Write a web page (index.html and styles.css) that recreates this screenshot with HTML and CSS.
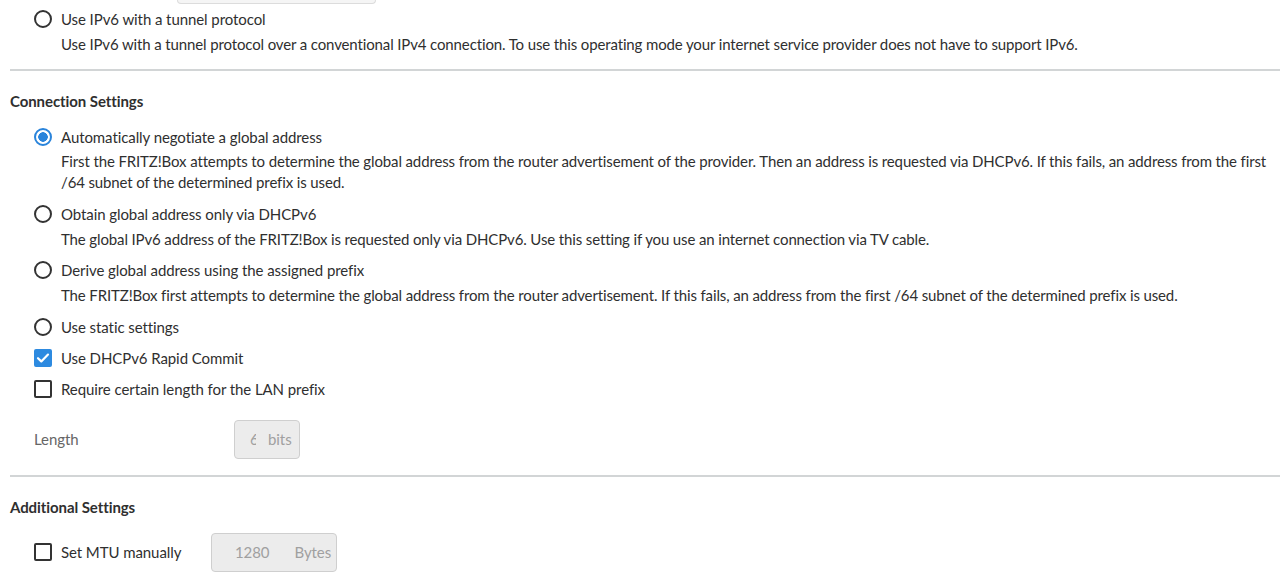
FILE: index.html
```html
<!DOCTYPE html>
<html lang="en">
<head>
  <meta charset="UTF-8" />
  <meta name="viewport" content="width=device-width, initial-scale=1.0" />
  <title>Internet - IPv6</title>
  <link rel="stylesheet" href="styles.css">
</head>
<body>
  <div class="page">
    <div class="stub-field"></div>

    <div class="option">
      <div class="option-row"><span class="radio"></span><label>Use IPv6 with a tunnel protocol</label></div>
      <p class="desc">Use IPv6 with a tunnel protocol over a conventional IPv4 connection. To use this operating mode your internet service provider does not have to support IPv6.</p>
    </div>

    <hr class="divider">

    <h2 class="section-title">Connection Settings</h2>
    <div class="options">
      <div class="option">
        <div class="option-row"><span class="radio checked"></span><label>Automatically negotiate a global address</label></div>
        <p class="desc">First the FRITZ!Box attempts to determine the global address from the router advertisement of the provider. Then an address is requested via DHCPv6. If this fails, an address from the first /64 subnet of the determined prefix is used.</p>
      </div>
      <div class="option">
        <div class="option-row"><span class="radio"></span><label>Obtain global address only via DHCPv6</label></div>
        <p class="desc">The global IPv6 address of the FRITZ!Box is requested only via DHCPv6. Use this setting if you use an internet connection via TV cable.</p>
      </div>
      <div class="option">
        <div class="option-row"><span class="radio"></span><label>Derive global address using the assigned prefix</label></div>
        <p class="desc">The FRITZ!Box first attempts to determine the global address from the router advertisement. If this fails, an address from the first /64 subnet of the determined prefix is used.</p>
      </div>
      <div class="option">
        <div class="option-row"><span class="radio"></span><label>Use static settings</label></div>
      </div>
      <div class="option">
        <div class="option-row">
          <span class="checkbox checked">
            <svg viewBox="0 0 18 18" width="18" height="18"><path d="M4 9.2l3.3 3.2L14 5.6" fill="none" stroke="#fff" stroke-width="2.2" stroke-linecap="round" stroke-linejoin="round"/></svg>
          </span>
          <label>Use DHCPv6 Rapid Commit</label>
        </div>
      </div>
      <div class="option">
        <div class="option-row"><span class="checkbox"></span><label>Require certain length for the LAN prefix</label></div>
      </div>
    </div>

    <div class="field-row length-row">
      <span class="field-label">Length</span>
      <div class="unit-field length-field">
        <span class="value clipped">64</span>
        <span class="unit">bits</span>
      </div>
    </div>

    <hr class="divider">

    <h2 class="section-title">Additional Settings</h2>
    <div class="mtu-row">
      <div class="option-row"><span class="checkbox"></span><label>Set MTU manually</label></div>
      <div class="unit-field mtu-field">
        <span class="value">1280</span>
        <span class="unit">Bytes</span>
      </div>
    </div>
  </div>
</body>
</html>
```

FILE: styles.css
```css
body {
  margin: 0;
  font-family: Lato, "Open Sans", sans-serif;
  font-size: 15px;
  letter-spacing: -0.08px;
  color: #2f2f2f;
  background: #fff;
}
.page {
  padding-left: 10px;
}
.stub-field {
  margin-left: 167px;
  width: 197px;
  height: 3px;
  background: #f5f5f5;
  border: 1px solid #dcdcdc;
  border-top: none;
  border-radius: 0 0 4px 4px;
}
.options {
  display: flex;
  flex-direction: column;
  gap: 7px;
}
.option {
  padding-left: 24px;
}
.stub-field + .option {
  margin-top: 3px;
}
.option-row {
  display: flex;
  align-items: center;
  gap: 9px;
  height: 24px;
}
.option-row label {
  line-height: 24px;
}
.desc {
  margin: 3px 0 1.5px 27px;
  line-height: 21px;
  letter-spacing: -0.13px;
}
.option:first-child .desc {
  margin-top: 2px;
}
.radio {
  box-sizing: border-box;
  width: 18px;
  height: 18px;
  border: 2px solid #333;
  border-radius: 50%;
  flex-shrink: 0;
}
.radio.checked {
  border-color: #2a84db;
  background: radial-gradient(circle, #2a84db 0 4.5px, #fff 5px);
}
.checkbox {
  box-sizing: border-box;
  width: 18px;
  height: 18px;
  border: 2px solid #333;
  border-radius: 2px;
  flex-shrink: 0;
  display: flex;
}
.checkbox.checked {
  border-color: #2d8ae0;
  background: #2d8ae0;
}
.checkbox svg {
  margin: -2px;
}
.divider {
  border: none;
  border-top: 2px solid #d2d5d6;
  margin: 0;
}
.option + .divider {
  margin-top: 14px;
}
.section-title {
  font-size: 15px;
  font-weight: 700;
  margin: 0;
  padding: 20px 0 13px;
  line-height: 21px;
}
.field-row {
  display: flex;
  align-items: center;
}
.length-row {
  margin: 19px 0 16px 24px;
}
.field-label {
  width: 200px;
  color: #666;
}
.unit-field {
  box-sizing: border-box;
  display: flex;
  align-items: center;
  height: 39px;
  background: #ececec;
  border: 1px solid #cfcfcf;
  border-radius: 4px;
  color: #a0a0a0;
}
.length-field {
  width: 66px;
  padding-left: 15px;
}
.value.clipped {
  display: inline-block;
  width: 6px;
  overflow: hidden;
  white-space: nowrap;
}
.length-field .unit {
  margin-left: 12px;
}
.mtu-row {
  display: flex;
  align-items: center;
  padding-left: 24px;
  margin-top: 2px;
}
.mtu-row .option-row {
  width: 177px;
}
.mtu-field {
  width: 126px;
  padding-left: 23px;
}
.mtu-field .unit {
  margin-left: 25px;
}
```
